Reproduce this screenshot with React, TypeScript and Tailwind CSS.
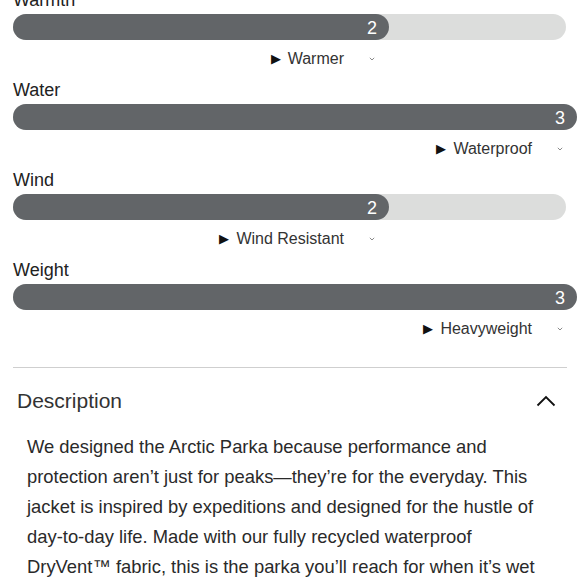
const ratings = [
  { name: "Warmth", value: 2, label: "Warmer" },
  { name: "Water", value: 3, label: "Waterproof" },
  { name: "Wind", value: 2, label: "Wind Resistant" },
  { name: "Weight", value: 3, label: "Heavyweight" },
]

const FULL = 564

function TinyChevron() {
  return (
    <svg width="6" height="4" viewBox="0 0 6 4" className="text-[#8a8a8a]">
      <path d="M0.8 0.8 L3 3 L5.2 0.8" fill="none" stroke="currentColor" strokeWidth="1" />
    </svg>
  )
}

function RatingRow({ name, value, label }: { name: string; value: number; label: string }) {
  const fillWidth = (value / 3) * FULL
  return (
    <div className="flex flex-col">
      <div className="h-6 leading-[26px] text-[18px] text-[#222]">{name}</div>
      <div className="mt-[3px] h-[26px] w-[553px] rounded-full bg-[#dcdddc]">
        <div
          className="h-[26px] rounded-full bg-[#626568] flex items-center justify-end pr-[12px] pt-[2px] text-[18px] text-white"
          style={{ width: fillWidth }}
        >
          {value}
        </div>
      </div>
      <div className="mt-[6px] h-6 pt-[2px] flex items-center justify-end" style={{ width: fillWidth }}>
        <div className="flex items-center">
          <span className="text-[13px] text-[#111] mr-[7px]">▶</span>
          <span className="text-[16px] leading-6 text-[#333]">{label}</span>
          <span className="ml-[25px] mr-[14px] flex items-center">
            <TinyChevron />
          </span>
        </div>
      </div>
    </div>
  )
}

export default function App() {
  return (
    <div className="w-[580px] h-[580px] overflow-hidden bg-white font-['Liberation_Sans',Arial,sans-serif]">
      <div className="-mt-[13px] pl-[13px] flex flex-col gap-[7px]">
        {ratings.map((r) => (
          <RatingRow key={r.name} {...r} />
        ))}
      </div>
      <div className="mx-[13px] mt-[27px] border-t border-[#cfcfcf]" />
      <div className="flex items-center justify-between pl-[17px] pr-[24px] h-[64px] pt-[1px]">
        <span className="text-[21px] text-[#333]">Description</span>
        <svg width="20" height="12" viewBox="0 0 20 12">
          <path d="M1.5 10.5 L10 2 L18.5 10.5" fill="none" stroke="#111" strokeWidth="1.8" />
        </svg>
      </div>
      <p className="pl-[27px] pr-[40px] mt-[0px] text-[18.4px] leading-[30px] text-[#2a2a2a]">
        We designed the Arctic Parka because performance and protection aren’t just for peaks—they’re for the
        everyday. This jacket is inspired by expeditions and designed for the hustle of day-to-day life. Made with
        our fully recycled waterproof DryVent™ fabric, this is the parka you’ll reach for when it’s wet
      </p>
    </div>
  )
}
